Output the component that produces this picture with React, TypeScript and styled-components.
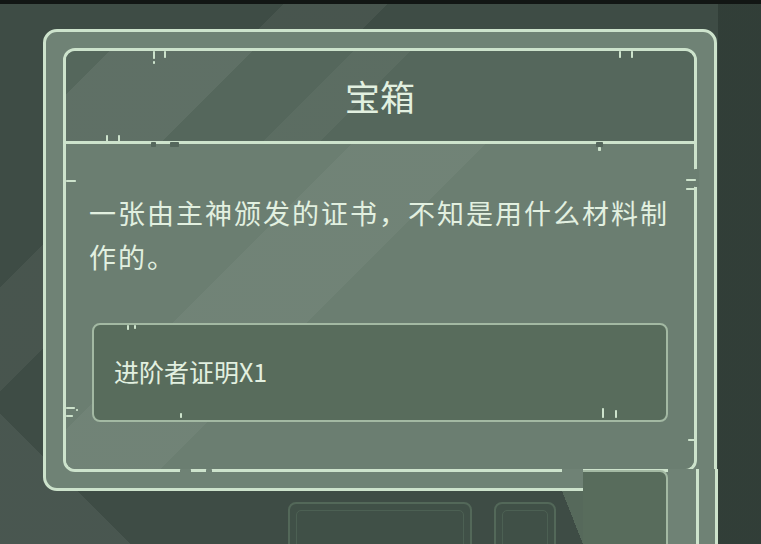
import React, { FC } from 'react';
import styled, { createGlobalStyle } from 'styled-components';

// 配色
const LINE = '#cde3cc';
const TEXT = '#e2f0e0';
const HEAD_BG = '#55675c';
const BODY_BG = '#6b7e71';
const RIM_BG = '#6f8275';
const ITEM_BG = '#586c5c';

const GlobalStyle = createGlobalStyle`
  html, body { margin: 0; padding: 0; background: #3e4c45; }
  body { font-family: "Noto Sans CJK SC", "Noto Sans", sans-serif; }
`;

// 线框上的刻度与缺口：[x, y, w, h, color?]
type Mark = [number, number, number, number, string?];

const frameMarks: Mark[] = [
  // 上边
  [90, 3, 2, 8], [101, 3, 2, 7], [90, 13, 2, 3],
  [556, 3, 2, 7], [568, 3, 2, 7],
  // 标题分隔线
  [43, 87, 2, 9], [55, 87, 2, 9],
  [88, 94, 5, 5, HEAD_BG], [107, 94, 9, 5, HEAD_BG],
  [533, 94, 7, 5, HEAD_BG], [535, 99, 3, 4],
  // 左边
  [3, 132, 10, 2], [3, 359, 9, 2], [3, 367, 7, 2], [13, 361, 2, 2],
  // 右边
  [631, 121, 5, 18, BODY_BG], [623, 131, 10, 2], [623, 140, 10, 2], [625, 391, 9, 2],
  // 下边
  [117, 421, 11, 5, RIM_BG], [143, 421, 6, 5, RIM_BG],
];

const itemMarks: Mark[] = [
  [35, 2, 2, 5], [42, 2, 2, 4], [88, 90, 2, 5], [510, 85, 2, 10], [523, 87, 2, 8],
];

const Marks: FC<{ marks: Mark[] }> = ({ marks }) => (
  <MarkLayer>
    {marks.map(([x, y, w, h, c], i) => (
      <rect key={i} x={x} y={y} width={w} height={h} rx={0.8} fill={c ?? LINE} />
    ))}
  </MarkLayer>
);

const App: FC = () => {
  return (
    <>
      <GlobalStyle />
      <Screen>
        <TopBar />
        <OuterFrame>
          <InnerFrame>
            <Header>
              <Title>宝箱</Title>
            </Header>
            <Body>
              <Description>一张由主神颁发的证书，不知是用什么材料制作的。</Description>
              <ItemBox>
                <ItemName>进阶者证明X1</ItemName>
                <Marks marks={itemMarks} />
              </ItemBox>
            </Body>
            <Marks marks={frameMarks} />
          </InnerFrame>
        </OuterFrame>

        <ButtonRow>
          <GhostButton $w={184}>
            <GhostInner />
          </GhostButton>
          <GhostButton $w={62}>
            <GhostInner />
          </GhostButton>
        </ButtonRow>

        {/* 右下角：后层面板露出的部分 */}
        <CornerPatch>
          <PatchGap />
          <PatchPanel />
          <PatchRail />
        </CornerPatch>
      </Screen>
    </>
  );
};

const Screen = styled.div`
  position: relative;
  width: 761px;
  height: 544px;
  overflow: hidden;
  background:
    linear-gradient(to right, transparent 718px, rgba(20, 30, 25, 0.3) 718px),
    linear-gradient(135deg, transparent 0 22%, rgba(255, 255, 255, 0.05) 22% 30%, transparent 30% 100%),
    linear-gradient(45deg, rgba(255, 255, 255, 0.06) 0 10%, transparent 10% 100%),
    #3e4c45;
`;

const TopBar = styled.div`
  height: 4px;
  background: #121614;
`;

const OuterFrame = styled.div`
  box-sizing: border-box;
  width: 674px;
  height: 462px;
  margin: 25px 0 0 43px;
  padding: 16px 17px;
  border: 3px solid ${LINE};
  border-radius: 14px;
  background: ${RIM_BG};
`;

const InnerFrame = styled.div`
  position: relative;
  box-sizing: border-box;
  height: 424px;
  display: flex;
  flex-direction: column;
  border: 3px solid ${LINE};
  border-radius: 12px;
  background: ${BODY_BG};
`;

const MarkLayer = styled.svg`
  position: absolute;
  inset: -3px;
  width: calc(100% + 6px);
  height: calc(100% + 6px);
  overflow: visible;
  pointer-events: none;
`;

const Header = styled.div`
  height: 90px;
  flex: none;
  display: flex;
  align-items: center;
  justify-content: center;
  border-bottom: 3px solid ${LINE};
  border-radius: 9px 9px 0 0;
  background:
    linear-gradient(135deg, transparent 0 6%, rgba(255, 255, 255, 0.06) 6% 26%, transparent 26% 40%, rgba(255, 255, 255, 0.04) 40% 48%, transparent 48%),
    ${HEAD_BG};
`;

const Title = styled.h1`
  margin: 0 0 2px;
  font-size: 35px;
  font-weight: 400;
  line-height: 1;
  color: ${TEXT};
`;

const Body = styled.div`
  flex: 1;
  padding: 47px 0 0 23px;
  border-radius: 0 0 9px 9px;
  background:
    linear-gradient(135deg, transparent 0 30%, rgba(255, 255, 255, 0.04) 30% 44%, transparent 44%),
    ${BODY_BG};
`;

const Description = styled.p`
  width: 600px;
  margin: 0;
  font-size: 27px;
  line-height: 44px;
  letter-spacing: 2px;
  color: ${TEXT};
`;

const ItemBox = styled.div`
  position: relative;
  box-sizing: border-box;
  width: 576px;
  height: 99px;
  margin: 44px 0 0 3px;
  padding: 0 20px 4px;
  display: flex;
  align-items: center;
  border: 2px solid #a3b9a3;
  border-radius: 8px;
  background: ${ITEM_BG};

  & > svg { inset: -2px; width: calc(100% + 4px); height: calc(100% + 4px); }
`;

const ItemName = styled.span`
  font-size: 25px;
  color: ${TEXT};
`;

const ButtonRow = styled.div`
  display: flex;
  gap: 22px;
  margin: 11px 0 0 288px;
  opacity: 0.45;
`;

const GhostButton = styled.div<{ $w: number }>`
  box-sizing: border-box;
  width: ${(p) => p.$w}px;
  height: 60px;
  padding: 6px;
  border: 2px solid #6d8a72;
  border-radius: 8px;
  background: #44564b;
`;

const GhostInner = styled.div`
  height: 100%;
  border: 1px solid #5f7a64;
  border-radius: 5px;
`;

const CornerPatch = styled.div`
  position: absolute;
  left: 562px;
  top: 469px;
  width: 156px;
  height: 75px;
  display: flex;
`;

const PatchGap = styled.div`
  width: 21px;
  background:
    linear-gradient(to bottom, ${RIM_BG} 0 19px, ${LINE} 19px 22px, transparent 22px),
    linear-gradient(to bottom left, #56695b 50%, transparent 50%) 0 22px / 100% 53px no-repeat;
`;

const PatchPanel = styled.div`
  box-sizing: border-box;
  width: 85px;
  margin-top: 1px;
  border-top: 2px solid #a3b9a3;
  border-right: 2px solid #a3b9a3;
  border-top-right-radius: 8px;
  background: ${ITEM_BG};
`;

const PatchRail = styled.div`
  position: relative;
  flex: 1;
  background: ${RIM_BG};
  border-right: 3px solid ${LINE};

  &::before {
    content: '';
    position: absolute;
    left: 28px;
    top: 0;
    bottom: 0;
    width: 3px;
    background: ${LINE};
  }
`;

export default App;
